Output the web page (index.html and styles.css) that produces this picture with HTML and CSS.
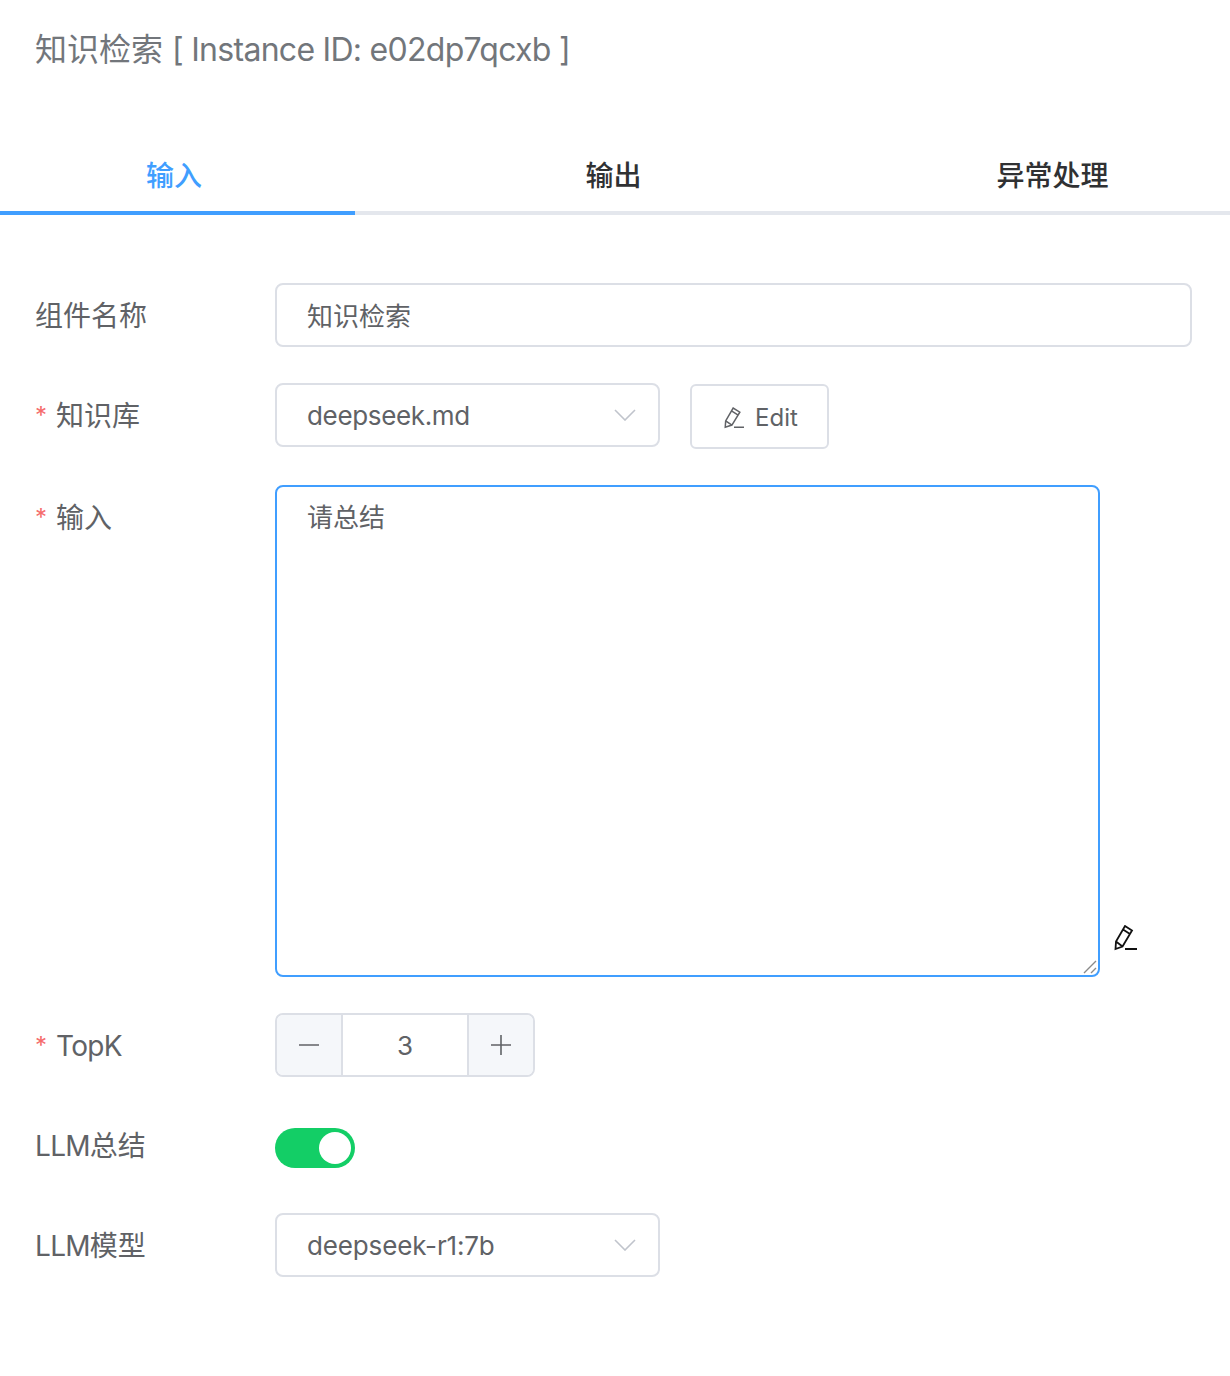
FILE: index.html
```html
<!DOCTYPE html>
<html lang="zh-CN">
<head>
<meta charset="utf-8">
<title>知识检索</title>
<link rel="stylesheet" href="styles.css">
</head>
<body>
<header class="title">知识检索 <span class="title-id">[ Instance ID: e02dp7qcxb ]</span></header>
<nav class="tabs">
  <div class="tab tab-first active">输入</div>
  <div class="tab tab-mid">输出</div>
  <div class="tab tab-last">异常处理</div>
</nav>
<form class="form">
  <div class="row">
    <label class="label">组件名称</label>
    <div class="control"><div class="input full">知识检索</div></div>
  </div>
  <div class="row">
    <label class="label"><span class="req">*</span>知识库</label>
    <div class="control">
      <div class="input select sel-md">deepseek.md
        <svg class="chev" viewBox="0 0 22 12" width="22" height="12"><path d="M1 1l10 10L21 1" fill="none" stroke="#c0c4cc" stroke-width="1.6"/></svg>
      </div>
      <button type="button" class="btn">
        <svg class="pencil" viewBox="0 0 24 26" width="20" height="22"><path d="M1.500 24l.5-7.500L11 1l8 5-9.500 15.500zM9 4.500l8 5M2 16.500l7.500 5M12 24h12" fill="none" stroke="#606266" stroke-width="1.800"/></svg>
        <span>Edit</span>
      </button>
    </div>
  </div>
  <div class="row row-area">
    <label class="label label-area"><span class="req">*</span>输入</label>
    <div class="control control-area">
      <div class="area-wrap">
        <textarea class="area">请总结</textarea>
        <svg class="grip" viewBox="0 0 14 14" width="14" height="14"><path d="M1 13L13 1M8 13l5-5" fill="none" stroke="#8a8a8a" stroke-width="1.400"/></svg>
      </div>
      <svg class="pencil-big" viewBox="0 0 24 26" width="24" height="26"><path d="M2.500 24l.5-7.500L12 1l7 4.500-9.500 16zM10 4.500l7 4.500M3 16.500l6.500 5M12 24h12" fill="none" stroke="#111" stroke-width="1.800"/></svg>
    </div>
  </div>
  <div class="row">
    <label class="label"><span class="req">*</span><span class="lat">TopK</span></label>
    <div class="control">
      <div class="stepper">
        <div class="step step-l"><svg viewBox="0 0 20 20" width="20" height="20"><path d="M0 10h20" stroke="#606266" stroke-width="1.600"/></svg></div>
        <div class="step-val">3</div>
        <div class="step step-r"><svg viewBox="0 0 20 20" width="20" height="20"><path d="M0 10h20M10 0v20" stroke="#606266" stroke-width="1.600" fill="none"/></svg></div>
      </div>
    </div>
  </div>
  <div class="row">
    <label class="label"><span class="lat">LLM</span>总结</label>
    <div class="control"><div class="switch"><span class="knob"></span></div></div>
  </div>
  <div class="row">
    <label class="label"><span class="lat">LLM</span>模型</label>
    <div class="control">
      <div class="input select sel-r1">deepseek-r1:7b
        <svg class="chev" viewBox="0 0 22 12" width="22" height="12"><path d="M1 1l10 10L21 1" fill="none" stroke="#c0c4cc" stroke-width="1.6"/></svg>
      </div>
    </div>
  </div>
</form>
</body>
</html>
```

FILE: styles.css
```css
* { box-sizing: border-box; }
html, body { margin: 0; padding: 0; background: #fff; }
body {
  width: 1230px;
  height: 1376px;
  overflow: hidden;
  font-family: Inter, "Liberation Sans", "Noto Sans CJK SC", sans-serif;
  color: #606266;
}
.title {
  height: 98px;
  padding: 31px 0 0 35px;
  font-size: 32px;
  line-height: 38px;
  color: #72767b;
}
.title-id { letter-spacing: -0.72px; }
.tabs {
  margin-top: 37px;
  display: grid;
  grid-template-columns: 355px 520px 355px;
  height: 80px;
  border-bottom: 4px solid #e4e7ed;
}
.tab {
  height: 80px;
  padding-top: 1px;
  line-height: 80px;
  font-size: 28px;
  font-weight: 500;
  color: #303133;
  text-align: center;
}
.tab-first { padding-right: 7px; }
.tab-mid { padding-right: 3px; }
.tab-last { padding-right: 0; }
.active { color: #409eff; border-bottom: 4px solid #409eff; }
.form { padding-top: 68px; }
.row {
  display: flex;
  height: 64px;
  margin-bottom: 36px;
}
.label {
  width: 275px;
  padding: 1px 0 0 35px;
  font-size: 28px;
  line-height: 64px;
  color: #606266;
}
.label-area { padding-top: 3px; }
.lat { letter-spacing: -0.7px; }
.req {
  color: #f56c6c;
  font-size: 24px;
  margin-right: 9px;
  vertical-align: 2px;
}
.control {
  display: flex;
  align-items: flex-start;
  gap: 30px;
}
.input {
  height: 64px;
  border: 2px solid #dcdfe6;
  border-radius: 8px;
  padding: 0 30px;
  font-size: 26px;
  line-height: 62px;
  color: #606266;
  background: #fff;
}
.full { width: 917px; line-height: 63px; }
.select { width: 385px; position: relative; }
.sel-md { letter-spacing: -0.35px; }
.sel-r1 { letter-spacing: -0.15px; }
.chev { position: absolute; right: 22px; top: 24px; }
.btn {
  width: 139px;
  height: 65px;
  margin-top: 1px;
  border: 2px solid #dcdfe6;
  border-radius: 6px;
  background: #fff;
  color: #606266;
  font-family: inherit;
  font-size: 24px;
  display: flex;
  align-items: center;
  justify-content: center;
  gap: 11px;
  padding: 2px 0 0 3px;
}
.row-area { height: 494px; }
.control-area { align-items: flex-end; gap: 13px; }
.area-wrap { position: relative; width: 825px; height: 492px; }
.area {
  display: block;
  width: 825px;
  height: 492px;
  border: 2px solid #409eff;
  border-radius: 8px;
  padding: 11px 30px;
  font-family: inherit;
  font-size: 26px;
  line-height: 40px;
  color: #606266;
  outline: none;
  resize: none;
}
.grip { position: absolute; right: 3px; bottom: 3px; }
.pencil-big { margin-bottom: 26px; }
.stepper {
  display: flex;
  width: 260px;
  height: 64px;
  border: 2px solid #dcdfe6;
  border-radius: 8px;
  overflow: hidden;
}
.step {
  width: 66px;
  flex: none;
  display: flex;
  align-items: center;
  justify-content: center;
  background: #f5f7fa;
}
.step-l { border-right: 2px solid #dcdfe6; }
.step-r { border-left: 2px solid #dcdfe6; }
.step-val {
  flex: 1;
  text-align: center;
  font-size: 26px;
  line-height: 62px;
}
.switch {
  position: relative;
  width: 80px;
  height: 40px;
  margin-top: 15px;
  border-radius: 20px;
  background: #13ce66;
}
.knob {
  position: absolute;
  top: 4px;
  right: 4px;
  width: 32px;
  height: 32px;
  border-radius: 50%;
  background: #fff;
}
```
